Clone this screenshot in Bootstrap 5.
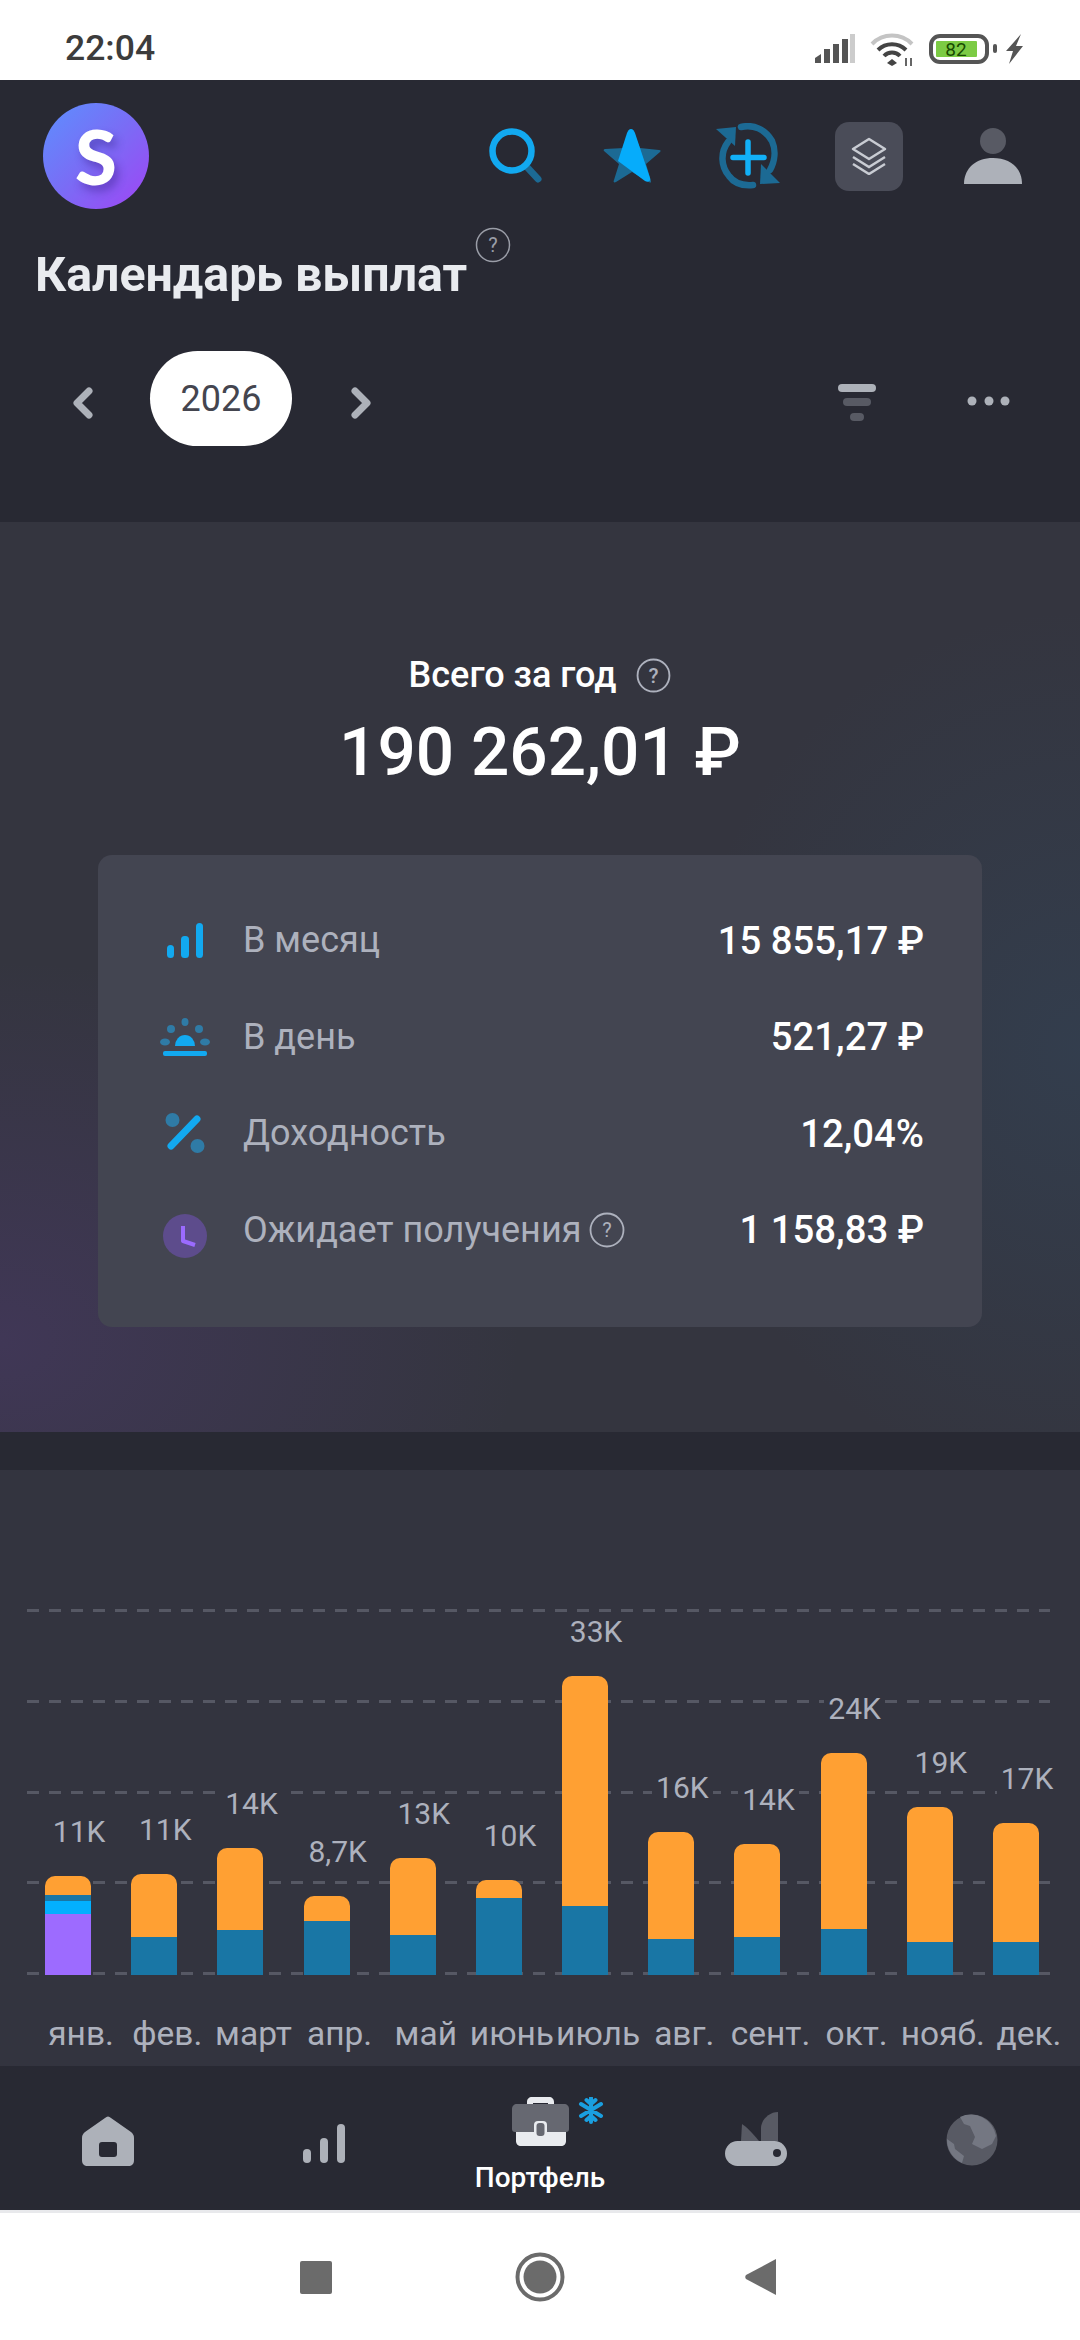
<!DOCTYPE html>
<html lang="ru">

<head>
    <meta charset="UTF-8">
    <title>Календарь выплат</title>
    <link href="https://cdn.jsdelivr.net/npm/bootstrap@5.3.0/dist/css/bootstrap.min.css" rel="stylesheet">
    <style>
        html,
        body {
            width: 1080px;
            height: 2340px;
            overflow: hidden;
        }

        body {
            background-color: #282933;
            font-family: Roboto, "Liberation Sans", sans-serif;
            color: #fff;
        }

        svg {
            display: block;
            flex: none;
        }

        /* статус-бар */
        .status-bar {
            height: 80px;
            background-color: #fff;
            padding: 0 56px 0 65px;
        }

        .status-time {
            font-size: 35.5px;
            font-weight: 500;
            color: #3c3c3c;
            line-height: 1;
            padding-top: 18px;
        }

        .status-icons {
            margin-top: 18px;
        }

        /* шапка */
        .top-head {
            height: 442px;
            background-color: #282933;
        }

        .top-icons {
            padding: 23px 26px 0 43px;
            height: 147px;
        }

        .logo-circle {
            width: 106px;
            height: 106px;
            border-radius: 50%;
            background: linear-gradient(135deg, #5c90ff 0%, #7a6cf5 50%, #a044f5 100%);
            font-family: Lato, Roboto, sans-serif;
            font-size: 76px;
            font-weight: 900;
            line-height: 1;
            text-shadow: 4px 6px 8px rgba(60, 30, 140, .45);
        }

        .ico-box {
            height: 106px;
            width: 116px;
        }

        .ico-box-lg {
            width: 126px;
        }

        .ico-box-xl {
            width: 122px;
        }

        .layers-bg {
            width: 68px;
            height: 69px;
            background-color: #4a4c58;
            border-radius: 14px;
        }

        .title-row {
            padding-left: 35px;
        }

        .page-title {
            font-size: 48.3px;
            font-weight: 700;
            line-height: 52px;
            color: #e9ebef;
            margin: 22px 8px 0 0;
        }

        .year-row {
            margin-top: 50px;
            padding: 0 70px 0 72px;
        }

        .year-pill {
            width: 142px;
            height: 95px;
            border-radius: 48px;
            background-color: #fff;
            color: #44454f;
            font-size: 36px;
            font-weight: 400;
            margin: 0 58px 0 56px;
        }

        .ico-low {
            margin-top: 8px;
        }

        .dots-ico {
            margin: 5px 0 0 91px;
        }

        /* итоги */
        .total-panel {
            height: 910px;
            padding-top: 133px;
            background:
                radial-gradient(520px 380px at 0% 90%, rgba(92, 60, 140, .30), transparent 100%),
                radial-gradient(400px 440px at 100% 58%, rgba(48, 86, 118, .26), transparent 100%),
                #34353f;
        }

        .total-cap {
            font-size: 36px;
            font-weight: 500;
            line-height: 40px;
            gap: 20px;
        }

        .total-sum {
            font-size: 67.5px;
            font-weight: 500;
            line-height: 80px;
            margin-top: 17px;
        }

        .sum-card {
            width: 884px;
            margin: 63px auto 0 98px;
            padding: 37px 58px 49px 49px;
            background-color: #434551;
            border-radius: 14px;
        }

        .sum-row {
            height: 96.5px;
            font-size: 36px;
        }

        .sum-ico {
            width: 76px;
            margin-right: 20px;
        }

        .sum-ico-low {
            padding-top: 12px;
        }

        .sum-label {
            color: #adb1bd;
        }

        .sum-val {
            font-size: 38.3px;
            font-weight: 500;
        }

        .gap-strip {
            height: 38px;
        }

        /* график */
        .chart-panel {
            height: 596px;
            background-color: #33343f;
            padding: 139px 21px 0 25px;
        }

        .plot-box {
            height: 366px;
        }

        .grid-layer {
            position: absolute;
            inset: 0 9px 0 2px;
        }

        .grid-line {
            height: 3px;
            background: repeating-linear-gradient(90deg, #565864 0 12px, transparent 12px 22px);
        }

        .bar-col {
            width: 86.2px;
            position: relative;
        }

        .bar-val {
            font-size: 30px;
            line-height: 36px;
            color: #adb1bd;
            transform: translateX(11px);
            margin-bottom: 26px;
            white-space: nowrap;
        }

        .bar-val span {
            background-color: #33343f;
            padding: 0 4px;
        }

        .bar-stack {
            width: 46px;
            border-radius: 10px 10px 0 0;
            overflow: hidden;
        }

        .seg-orange {
            background-color: #ffa033;
        }

        .seg-blue {
            background-color: #1976a5;
        }

        .seg-sky {
            background-color: #03b0ff;
        }

        .seg-violet {
            background-color: #9d6bff;
        }

        .month-row {
            margin-top: 39px;
        }

        .month-name {
            width: 86.2px;
            text-align: center;
            font-size: 33.5px;
            line-height: 40px;
            color: #adb1bd;
            transform: translateX(13px);
            white-space: nowrap;
        }

        /* нижнее меню */
        .tab-bar {
            height: 144px;
            background-color: #282933;
        }

        .tab-item {
            width: 216px;
            padding-bottom: 44px;
        }

        .tab-item-bars {
            padding-bottom: 47px;
        }

        .tab-active {
            padding: 31px 0 0;
        }

        .tab-ico {
            margin-left: 44px;
        }

        .tab-label {
            font-size: 28px;
            font-weight: 500;
            line-height: 34px;
            margin-top: 14px;
            white-space: nowrap;
        }

        /* кнопки андроида */
        .soft-keys {
            height: 130px;
            background-color: #fff;
            border-top: 3px solid #e8e9ec;
        }
    </style>
</head>

<body>

    <!-- Статус-бар -->
    <div class="status-bar d-flex align-items-center justify-content-between">
        <div class="status-time">22:04</div>
        <svg class="status-icons" width="210" height="34" viewBox="815 32 210 34">
            <g fill="#555">
                <path d="M816 63v-5l6-4v9z" />
                <rect x="825" y="49" width="6" height="14" />
                <rect x="834" y="44" width="6" height="19" />
                <rect x="843" y="39" width="6" height="24" />
            </g>
            <rect x="851" y="34" width="5" height="29" fill="#ccc" />
            <path d="M873 44a28 28 0 0 1 40 0" fill="none" stroke="#c4c4c4" stroke-width="4" />
            <path d="M879 50a20 20 0 0 1 28 0M885 56a11 11 0 0 1 16 0" fill="none" stroke="#444" stroke-width="4" />
            <path d="M893 59l-5 4 5 3 5-3z" fill="#444" />
            <path d="M907 58v8M912 58v8" stroke="#666" stroke-width="2" />
            <rect x="932" y="36" width="56" height="26" rx="9" fill="none" stroke="#555" stroke-width="4" />
            <rect x="937" y="41" width="41" height="16" rx="1" fill="#7ccb44" />
            <text x="957" y="56" text-anchor="middle" font-family="Roboto, sans-serif" font-size="19" fill="#174a00">82</text>
            <rect x="994" y="44" width="4" height="9" rx="2" fill="#555" />
            <path d="M1022 34l-15 17h7l-4 13 14-18h-7z" fill="#555" />
        </svg>
    </div>

    <!-- Шапка -->
    <header class="top-head">
        <div class="top-icons d-flex align-items-start justify-content-between">
            <div class="logo-circle d-flex align-items-center justify-content-center">S</div>
            <div class="d-flex align-items-center">
                <div class="ico-box d-flex align-items-center justify-content-center">
                    <svg width="54" height="56" viewBox="0 0 54 56">
                        <path d="M37 38l12 13" stroke="#1c6a94" stroke-width="7" stroke-linecap="round" />
                        <circle cx="23" cy="23" r="19.5" fill="none" stroke="#12a9f0" stroke-width="6.5" />
                    </svg>
                </div>
                <div class="ico-box d-flex align-items-center justify-content-center">
                    <svg width="58" height="56" viewBox="0 0 58 56">
                        <path d="M29 2l8 18 19 2c2 0 2 1 1 2L43 36l5 17c0 2-1 2-2 1L29 44 13 54c-2 1-3 0-2-2l5-16L1 23c-1-1 0-2 1-2l19-1z" fill="#1c6a94" />
                        <path d="M28 1c2 0 3 2 4 4l15 45c1 3-2 5-5 3L15 33l9-28c1-2 2-4 4-4z" fill="#06acfb" />
                    </svg>
                </div>
                <div class="ico-box d-flex align-items-center justify-content-center">
                    <svg width="66" height="66" viewBox="0 0 66 66">
                        <path d="M13 19A27 27 0 0 0 14 53C19 60 27 63 38 62" fill="none" stroke="#1c6a94" stroke-width="6.5" stroke-linecap="round" />
                        <path d="M1 6l20-2-1 19z" fill="#1c6a94" />
                        <path d="M26 4C38 1 50 6 57 18c4 9 3 20-2 29" fill="none" stroke="#1c6a94" stroke-width="6.5" stroke-linecap="round" />
                        <path d="M65 60l-20 1 1-20z" fill="#1c6a94" />
                        <path d="M33 19v31M18 34.500h31" stroke="#12b0f7" stroke-width="5.500" stroke-linecap="round" />
                    </svg>
                </div>
                <div class="ico-box ico-box-lg d-flex align-items-center justify-content-center">
                    <div class="layers-bg d-flex align-items-center justify-content-center">
                        <svg width="36" height="38" viewBox="0 0 36 38">
                            <path d="M18 2l16 10-16 10L2 12z" fill="none" stroke="#c9ccd3" stroke-width="2.5" stroke-linejoin="round" />
                            <path d="M2 20l16 10 16-10M2 27l16 10 16-10" fill="none" stroke="#c9ccd3" stroke-width="2.5" />
                        </svg>
                    </div>
                </div>
                <div class="ico-box ico-box-xl d-flex align-items-center justify-content-center">
                    <svg width="58" height="58" viewBox="0 0 58 58">
                        <circle cx="29" cy="14" r="13" fill="#585a64" />
                        <path d="M0 57c0-16 12-26 29-26s29 10 29 26z" fill="#adb1b9" />
                    </svg>
                </div>
            </div>
        </div>

        <div class="title-row d-flex align-items-start">
            <h1 class="page-title">Календарь выплат</h1>
            <svg width="36" height="36" viewBox="0 0 36 36">
                <circle cx="18" cy="18" r="16.5" fill="none" stroke="#9a9da7" stroke-width="1.5" />
                <text x="18" y="25" text-anchor="middle" font-family="Roboto, sans-serif" font-size="20" fill="#9a9da7">?</text>
            </svg>
        </div>

        <div class="year-row d-flex align-items-center">
            <svg class="ico-low" width="22" height="32" viewBox="0 0 22 32">
                <path d="M17 4L5 16l12 12" fill="none" stroke="#adb1b9" stroke-width="7" stroke-linecap="round" stroke-linejoin="round" />
            </svg>
            <div class="year-pill d-flex align-items-center justify-content-center">2026</div>
            <svg class="ico-low" width="22" height="32" viewBox="0 0 22 32">
                <path d="M5 4l12 12L5 28" fill="none" stroke="#adb1b9" stroke-width="7" stroke-linecap="round" stroke-linejoin="round" />
            </svg>
            <svg class="ms-auto ico-low" width="38" height="38" viewBox="0 0 38 38">
                <rect x="0" y="0" width="38" height="8" rx="4" fill="#adb1b9" />
                <rect x="5" y="14" width="28" height="8" rx="4" fill="#585a64" />
                <rect x="12" y="29" width="14" height="8" rx="4" fill="#585a64" />
            </svg>
            <svg class="dots-ico" width="43" height="10" viewBox="0 0 43 10">
                <circle cx="5" cy="5" r="4.5" fill="#adb1b9" />
                <circle cx="22" cy="5" r="4.5" fill="#adb1b9" />
                <circle cx="38" cy="5" r="4.5" fill="#adb1b9" />
            </svg>
        </div>
    </header>

    <!-- Всего за год -->
    <section class="total-panel">
        <div class="total-cap d-flex justify-content-center align-items-center">
            <span>Всего за год</span>
            <svg width="35" height="35" viewBox="0 0 34 34">
                <circle cx="17" cy="17" r="15.5" fill="none" stroke="#adb1bd" stroke-width="1.8" />
                <text x="17" y="24" text-anchor="middle" font-family="Roboto, sans-serif" font-size="20" fill="#adb1bd">?</text>
            </svg>
        </div>
        <div class="total-sum text-center">190 262,01 ₽</div>

        <div class="sum-card">
            <div class="sum-row d-flex align-items-center">
                <div class="sum-ico d-flex justify-content-center">
                    <svg width="36" height="35" viewBox="0 0 36 35">
                        <rect x="0" y="22" width="7" height="13" rx="3.5" fill="#12a9f0" />
                        <rect x="14" y="13" width="8" height="22" rx="3.5" fill="#12a9f0" />
                        <rect x="29" y="0" width="7" height="35" rx="3.5" fill="#12a9f0" />
                    </svg>
                </div>
                <span class="sum-label">В месяц</span>
                <span class="sum-val ms-auto">15 855,17 ₽</span>
            </div>
            <div class="sum-row d-flex align-items-center">
                <div class="sum-ico d-flex justify-content-center">
                    <svg width="50" height="38" viewBox="0 0 50 38">
                        <g fill="#2f7ba6">
                            <ellipse cx="25" cy="4" rx="3.5" ry="4" />
                            <circle cx="11" cy="11" r="4" />
                            <circle cx="39" cy="11" r="4" />
                            <ellipse cx="5" cy="24" rx="5" ry="3.5" />
                            <ellipse cx="45" cy="24" rx="5" ry="3.5" />
                        </g>
                        <path d="M15 28a10 11 0 0 1 20 0z" fill="#12a9f0" />
                        <rect x="3" y="33" width="44" height="5" rx="2" fill="#12a9f0" />
                    </svg>
                </div>
                <span class="sum-label">В день</span>
                <span class="sum-val ms-auto">521,27 ₽</span>
            </div>
            <div class="sum-row d-flex align-items-center">
                <div class="sum-ico d-flex justify-content-center">
                    <svg width="40" height="40" viewBox="0 0 40 40">
                        <circle cx="7.5" cy="7" r="7" fill="#2f7ba6" />
                        <circle cx="32.5" cy="33" r="7" fill="#2f7ba6" />
                        <path d="M6 33L32 6" stroke="#12a9f0" stroke-width="7" stroke-linecap="round" />
                    </svg>
                </div>
                <span class="sum-label">Доходность</span>
                <span class="sum-val ms-auto">12,04%</span>
            </div>
            <div class="sum-row d-flex align-items-center">
                <div class="sum-ico sum-ico-low d-flex justify-content-center">
                    <svg width="44" height="44" viewBox="0 0 44 44">
                        <circle cx="22" cy="22" r="22" fill="#5d4c8c" />
                        <path d="M20 12v15l12 4" fill="none" stroke="#9b6bff" stroke-width="4" stroke-linejoin="round" />
                    </svg>
                </div>
                <span class="sum-label me-2">Ожидает получения</span>
                <svg width="36" height="36" viewBox="0 0 36 36">
                    <circle cx="18" cy="18" r="16.5" fill="none" stroke="#adb1bd" stroke-width="1.8" />
                    <text x="18" y="25" text-anchor="middle" font-family="Roboto, sans-serif" font-size="20" fill="#adb1bd">?</text>
                </svg>
                <span class="sum-val ms-auto">1 158,83 ₽</span>
            </div>
        </div>
    </section>

    <div class="gap-strip"></div>

    <!-- График -->
    <section class="chart-panel">
        <div class="plot-box position-relative">
            <div class="grid-layer d-flex flex-column justify-content-between">
                <div class="grid-line"></div>
                <div class="grid-line"></div>
                <div class="grid-line"></div>
                <div class="grid-line"></div>
                <div class="grid-line"></div>
            </div>
            <div class="d-flex align-items-end h-100 position-relative" id="barsBox"></div>
        </div>
        <div class="month-row d-flex" id="monthsBox"></div>
    </section>

    <!-- Нижнее меню -->
    <nav class="tab-bar d-flex">
        <div class="tab-item d-flex align-items-end justify-content-center">
            <svg width="52" height="50" viewBox="0 0 52 50">
                <path fill-rule="evenodd" d="M23 2c2-2 4-2 6 0l20 14c2 2 3 3 3 6v22c0 4-2 6-6 6H6c-4 0-6-2-6-6V22c0-3 1-4 3-6zM20 26c-2 0-3 1-3 3v9c0 2 1 3 3 3h12c2 0 3-1 3-3v-9c0-2-1-3-3-3z" fill="#adb1b9" />
            </svg>
        </div>
        <div class="tab-item tab-item-bars d-flex align-items-end justify-content-center">
            <svg width="42" height="39" viewBox="0 0 42 39">
                <rect x="0" y="25" width="8" height="14" rx="4" fill="#adb1b9" />
                <rect x="17" y="14" width="8" height="25" rx="4" fill="#adb1b9" />
                <rect x="34" y="0" width="8" height="39" rx="4" fill="#adb1b9" />
            </svg>
        </div>
        <div class="tab-item tab-active d-flex flex-column align-items-center">
            <svg class="tab-ico" width="100" height="50" viewBox="0 0 100 50">
                <path fill-rule="evenodd" d="M15 10V5c0-3 2-5 5-5h17c3 0 5 2 5 5v5h-6V6H21v4z" fill="#e9ebef" />
                <path d="M4 30h50v14c0 3-2 5-5 5H9c-3 0-5-2-5-5z" fill="#e9ebef" />
                <path d="M0 12c0-3 2-5 5-5h47c3 0 5 2 5 5v20c0 2-1 3-3 3H3c-2 0-3-1-3-3z" fill="#666871" />
                <rect x="22" y="24" width="13" height="17" rx="4" fill="#e9ebef" />
                <rect x="24.500" y="26" width="8" height="13" rx="3" fill="#666871" />
                <path d="M79 1v24M69 7l20 12M89 7L69 19M74.500 3l4.500 4 4.500-4M74.500 23l4.500-4 4.500 4" fill="none" stroke="#1a9fe0" stroke-width="4" stroke-linecap="round" />
            </svg>
            <div class="tab-label">Портфель</div>
        </div>
        <div class="tab-item d-flex align-items-end justify-content-center">
            <svg width="62" height="54" viewBox="0 0 62 54">
                <path d="M16 29L17 12c3 2 9 7 17 17z" fill="#585a64" />
                <path d="M36 29V16C36 8 44 0 53 0v29z" fill="#585a64" />
                <rect x="0" y="29" width="62" height="25" rx="12.500" fill="#adb1b9" />
                <circle cx="52" cy="41" r="4" fill="#282933" />
            </svg>
        </div>
        <div class="tab-item d-flex align-items-end justify-content-center">
            <svg width="52" height="52" viewBox="0 0 52 52">
                <circle cx="26" cy="26" r="25.500" fill="#585a64" />
                <path d="M14 3l4 7 6 2 5 11-3 7 10 5 10-5 4-8A25.500 25.500 0 0 0 14 3z" fill="#747782" />
                <path d="M1 25l7 5 1 5 9 7-2 7A25.500 25.500 0 0 1 1 25z" fill="#747782" />
            </svg>
        </div>
    </nav>

    <!-- Кнопки андроида -->
    <div class="soft-keys d-flex align-items-center">
        <svg width="1080" height="60" viewBox="0 2245 1080 60">
            <rect x="300" y="2259" width="32" height="33" rx="2" fill="#6b6b6b" />
            <circle cx="540" cy="2275" r="22.500" fill="none" stroke="#6b6b6b" stroke-width="4" />
            <circle cx="540" cy="2275" r="16.500" fill="#6b6b6b" />
            <path d="M776 2257v36l-30-16c-1-1-1-3 0-4z" fill="#6b6b6b" />
        </svg>
    </div>

    <script>
        // верх столбца считаем от нижней линии графика (y = 1975)
        const BASE = 1975;
        const meses = [
            { m: "янв.", v: "11K", top: 1876, split: 1895, extra: true },
            { m: "фев.", v: "11K", top: 1874, split: 1937 },
            { m: "март", v: "14K", top: 1848, split: 1930 },
            { m: "апр.", v: "8,7K", top: 1896, split: 1921 },
            { m: "май", v: "13K", top: 1858, split: 1935 },
            { m: "июнь", v: "10K", top: 1880, split: 1898 },
            { m: "июль", v: "33K", top: 1676, split: 1906 },
            { m: "авг.", v: "16K", top: 1832, split: 1939 },
            { m: "сент.", v: "14K", top: 1844, split: 1937 },
            { m: "окт.", v: "24K", top: 1753, split: 1929 },
            { m: "нояб.", v: "19K", top: 1807, split: 1942 },
            { m: "дек.", v: "17K", top: 1823, split: 1942 }
        ];

        const barsBox = document.getElementById("barsBox");
        const monthsBox = document.getElementById("monthsBox");

        meses.forEach(d => {
            const col = document.createElement("div");
            col.className = "bar-col d-flex flex-column align-items-center";
            const lower = d.extra
                ? `<div class="seg-blue" style="height:6px"></div>
                   <div class="seg-sky" style="height:13px"></div>
                   <div class="seg-violet" style="height:61px"></div>`
                : `<div class="seg-blue" style="height:${BASE - d.split}px"></div>`;
            col.innerHTML = `
                <div class="bar-val"><span>${d.v}</span></div>
                <div class="bar-stack">
                    <div class="seg-orange" style="height:${d.split - d.top}px"></div>
                    ${lower}
                </div>`;
            barsBox.appendChild(col);

            const name = document.createElement("div");
            name.className = "month-name";
            name.textContent = d.m;
            monthsBox.appendChild(name);
        });
    </script>

    <script src="https://cdn.jsdelivr.net/npm/bootstrap@5.3.0/dist/js/bootstrap.bundle.min.js"></script>
</body>

</html>
